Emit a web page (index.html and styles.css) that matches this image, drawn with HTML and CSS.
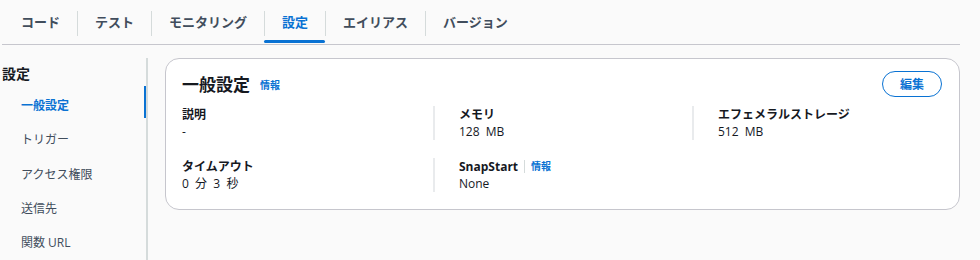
FILE: index.html
```html
<!DOCTYPE html>
<html lang="ja">
<head>
<meta charset="utf-8">
<link rel="stylesheet" href="styles.css">
</head>
<body>
<div class="page">
  <nav class="tabs">
    <div class="tab">コード</div>
    <div class="tab">テスト</div>
    <div class="tab">モニタリング</div>
    <div class="tab active">設定</div>
    <div class="tab">エイリアス</div>
    <div class="tab last">バージョン</div>
  </nav>
  <div class="body">
    <aside class="side">
      <div class="side-title">設定</div>
      <ul class="side-nav">
        <li class="current">一般設定</li>
        <li>トリガー</li>
        <li>アクセス権限</li>
        <li>送信先</li>
        <li>関数 URL</li>
      </ul>
    </aside>
    <section class="card">
      <div class="card-head">
        <h2>一般設定</h2>
        <a class="info">情報</a>
        <button class="edit">編集</button>
      </div>
      <div class="grid">
        <div class="cell">
          <div class="label">説明</div>
          <div class="value">-</div>
        </div>
        <div class="cell sep">
          <div class="label">メモリ</div>
          <div class="value">128 &nbsp;MB</div>
        </div>
        <div class="cell sep">
          <div class="label">エフェメラルストレージ</div>
          <div class="value">512 &nbsp;MB</div>
        </div>
        <div class="cell">
          <div class="label">タイムアウト</div>
          <div class="value">0 &nbsp;分 &nbsp;3 &nbsp;秒</div>
        </div>
        <div class="cell sep">
          <div class="label">SnapStart <span class="bar"></span><a class="info">情報</a></div>
          <div class="value">None</div>
        </div>
        <div class="cell"></div>
      </div>
    </section>
  </div>
</div>
</body>
</html>
```

FILE: styles.css
```css
* { box-sizing: border-box; }
html, body { margin: 0; padding: 0; }
body {
  background: #fafafa;
  font-family: "Open Sans", "Noto Sans CJK JP", sans-serif;
  color: #16191f;
  width: 980px;
  height: 260px;
  overflow: hidden;
}
.page { padding: 0 20px 0 2px; }
.tabs {
  display: flex;
  height: 45px;
  border-bottom: 1px solid #c6c6cd;
  padding-top: 11px;
}
.tab {
  position: relative;
  font-size: 13px;
  font-weight: 700;
  color: #414d5c;
  padding: 0 17px 0 17px;
  height: 25px;
  line-height: 23px;
  border-right: 1px solid #d5dbdb;
}
.tab:first-child { padding-left: 19px; }
.tab.last { border-right: none; }
.tab.active { color: #0972d3; }
.tab.active::after {
  content: "";
  position: absolute;
  left: -1px;
  right: 0;
  top: 29px;
  height: 3px;
  border-radius: 2px;
  background: #0972d3;
}
.body {
  display: flex;
  padding-top: 13px;
}
.side {
  width: 146px;
  flex: none;
  border-right: 2px solid #d5dbdb;
  margin-right: 17px;
  height: 202px;
  overflow: hidden;
  position: relative;
}
.side-title {
  font-size: 14px;
  font-weight: 700;
  padding: 5px 0 0 0;
  color: #16191f;
}
.side-nav {
  list-style: none;
  margin: 12px 0 0;
  padding: 0 0 0 19px;
}
.side-nav li {
  font-size: 12px;
  color: #414d5c;
  height: 34.25px;
  line-height: 22px;
}
.side-nav li:last-child { height: 22px; }
.side-nav li.current {
  color: #0972d3;
  font-weight: 700;
}
.side::after {
  content: "";
  position: absolute;
  right: 0;
  top: 28px;
  width: 2px;
  height: 32px;
  background: #0972d3;
}
.card {
  flex: 1;
  background: #fff;
  border: 1px solid #c6c6cd;
  border-radius: 14px;
  height: 152px;
  padding: 10px 17px 0 16px;
}
.card-head {
  display: flex;
  align-items: center;
  height: 28px;
}
.card-head h2 {
  margin: 0;
  font-size: 17px;
  font-weight: 700;
  color: #16191f;
}
.info {
  color: #0972d3;
  font-size: 10px;
  font-weight: 700;
  margin-left: 10px;
  margin-top: 3px;
}
.edit {
  margin-left: auto;
  margin-top: 2px;
  width: 60px;
  height: 26px;
  border: 1px solid #0972d3;
  border-radius: 13px;
  background: #fff;
  color: #0972d3;
  font-family: inherit;
  font-size: 12px;
  font-weight: 700;
  padding: 0;
}
.grid {
  display: grid;
  grid-template-columns: 251px 259px 1fr;
  row-gap: 18px;
  margin-top: 9px;
}
.cell {
  height: 34px;
}
.cell.sep {
  border-left: 2px solid #e9ebed;
  padding-left: 24px;
}
.label {
  font-size: 12px;
  font-weight: 700;
  line-height: 17px;
  color: #16191f;
  display: flex;
  align-items: center;
}
.label .info { margin: 0; font-size: 10px; }
.bar {
  display: inline-block;
  width: 1px;
  height: 13px;
  background: #d5dbdb;
  margin: 0 6px 0 6px;
}
.value {
  font-size: 12px;
  line-height: 17px;
  color: #16191f;
}
```
